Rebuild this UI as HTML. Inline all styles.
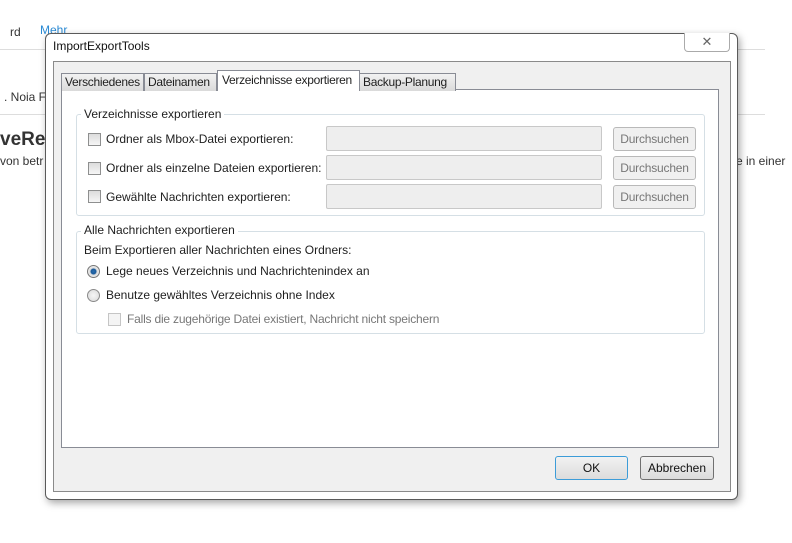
<!DOCTYPE html>
<html><head><meta charset="utf-8"><style>
*{box-sizing:border-box;margin:0;padding:0}
body{width:792px;height:543px;background:#fff;position:relative;overflow:hidden;font-family:"Liberation Sans","DejaVu Sans",sans-serif;font-size:12px;color:#1e1e1e}
.a{position:absolute}
.t{position:absolute;white-space:nowrap}
.cb{position:absolute;width:13px;height:13px;border:1px solid #8e8f8f;background:linear-gradient(#dcdcdc,#f6f6f6)}
.inp{position:absolute;height:25px;border:1px solid #c8c8c8;border-radius:2px;background:#eeeeee}
.btn{position:absolute;height:24px;border:1px solid #b9b9b9;border-radius:3px;background:#f0f0f0;color:#777;text-align:center;line-height:22px;letter-spacing:-0.2px}
.tab{position:absolute;top:73px;height:18px;border:1px solid #898c95;border-bottom:none;background:linear-gradient(#f2f2f2,#dadada);line-height:16px;padding-left:3px;white-space:nowrap;overflow:hidden;letter-spacing:-0.3px}
.grp{position:absolute;border:1px solid #d5dfe5;border-radius:3px}
.leg{position:absolute;background:#fff;padding:0 3px;white-space:nowrap}
</style></head><body>
<div class="t" style="left:10px;top:25px;color:#333">rd</div>
<div class="t" style="left:40px;top:23px;color:#2a8ad4">Mehr</div>
<div class="a" style="left:0;top:49px;width:765px;height:1px;background:#ddd"></div>
<div class="t" style="left:4px;top:90px;color:#333">. Noia F</div>
<div class="a" style="left:0;top:114px;width:765px;height:1px;background:#ddd"></div>
<div class="t" style="left:0;top:129px;font-size:19px;font-weight:bold;color:#333">veRe</div>
<div class="t" style="left:0;top:154px;color:#333">von betr</div>
<div class="t" style="left:736px;top:154px;color:#333">e in einer</div>
<div class="a" style="left:45px;top:33px;width:693px;height:467px;border:1px solid #5a5a5a;border-radius:6px;background:#fff;box-shadow:2px 3px 8px rgba(0,0,0,.35)"></div>
<div class="t" style="left:53px;top:39px;color:#111">ImportExportTools</div>
<div class="a" style="left:684px;top:33px;width:46px;height:19px;border:1px solid #aaa;border-top:none;border-radius:0 0 4px 4px;background:#fff;text-align:center;color:#666;font-size:13px;line-height:17px">✕</div>
<div class="a" style="left:53px;top:61px;width:678px;height:431px;border:1px solid #8a8a8a;background:#f0f0f0"></div>
<div class="a" style="left:61px;top:89px;width:658px;height:359px;border:1px solid #898c95;background:#fff"></div>
<div class="tab" style="left:61px;width:83px">Verschiedenes</div>
<div class="tab" style="left:144px;width:73px">Dateinamen</div>
<div class="tab" style="left:359px;width:97px">Backup-Planung</div>
<div class="tab" style="left:217px;top:70px;width:143px;height:21px;background:#fff;line-height:18px;padding-left:4px">Verzeichnisse exportieren</div>
<div class="grp" style="left:76px;top:114px;width:629px;height:102px"></div>
<div class="leg" style="left:81px;top:107px">Verzeichnisse exportieren</div>
<div class="cb" style="left:88px;top:133px"></div>
<div class="t" style="left:106px;top:132px">Ordner als Mbox-Datei exportieren:</div>
<div class="inp" style="left:326px;top:126px;width:276px"></div>
<div class="btn" style="left:613px;top:127px;width:83px">Durchsuchen</div>
<div class="cb" style="left:88px;top:162px"></div>
<div class="t" style="left:106px;top:161px">Ordner als einzelne Dateien exportieren:</div>
<div class="inp" style="left:326px;top:155px;width:276px"></div>
<div class="btn" style="left:613px;top:156px;width:83px">Durchsuchen</div>
<div class="cb" style="left:88px;top:190px"></div>
<div class="t" style="left:106px;top:190px">Gewählte Nachrichten exportieren:</div>
<div class="inp" style="left:326px;top:184px;width:276px"></div>
<div class="btn" style="left:613px;top:185px;width:83px">Durchsuchen</div>
<div class="grp" style="left:76px;top:231px;width:629px;height:103px"></div>
<div class="leg" style="left:81px;top:223px">Alle Nachrichten exportieren</div>
<div class="t" style="left:84px;top:243px">Beim Exportieren aller Nachrichten eines Ordners:</div>
<div class="a" style="left:87px;top:265px;width:13px;height:13px;border:1px solid #777;border-radius:50%;background:radial-gradient(#2a6fb0 0,#1a5a9a 2.5px,#ddd 3.5px,#eee 6px)"></div>
<div class="t" style="left:106px;top:264px">Lege neues Verzeichnis und Nachrichtenindex an</div>
<div class="a" style="left:87px;top:289px;width:13px;height:13px;border:1px solid #8a8a8a;border-radius:50%;background:radial-gradient(#f6f6f6,#d8d8d8)"></div>
<div class="t" style="left:106px;top:288px">Benutze gewähltes Verzeichnis ohne Index</div>
<div class="cb" style="left:108px;top:313px;border-color:#c5c5c5;background:#f4f4f4"></div>
<div class="t" style="left:127px;top:312px;color:#777;letter-spacing:-0.2px">Falls die zugehörige Datei existiert, Nachricht nicht speichern</div>
<div class="a" style="left:555px;top:456px;width:73px;height:24px;border:1px solid #3c9cd8;border-radius:3px;background:linear-gradient(#f2f2f2,#dcdcdc);text-align:center;line-height:22px;color:#111">OK</div>
<div class="a" style="left:640px;top:456px;width:74px;height:24px;border:1px solid #707070;border-radius:3px;background:linear-gradient(#f2f2f2,#dcdcdc);text-align:center;line-height:22px;color:#111">Abbrechen</div>
</body></html>
